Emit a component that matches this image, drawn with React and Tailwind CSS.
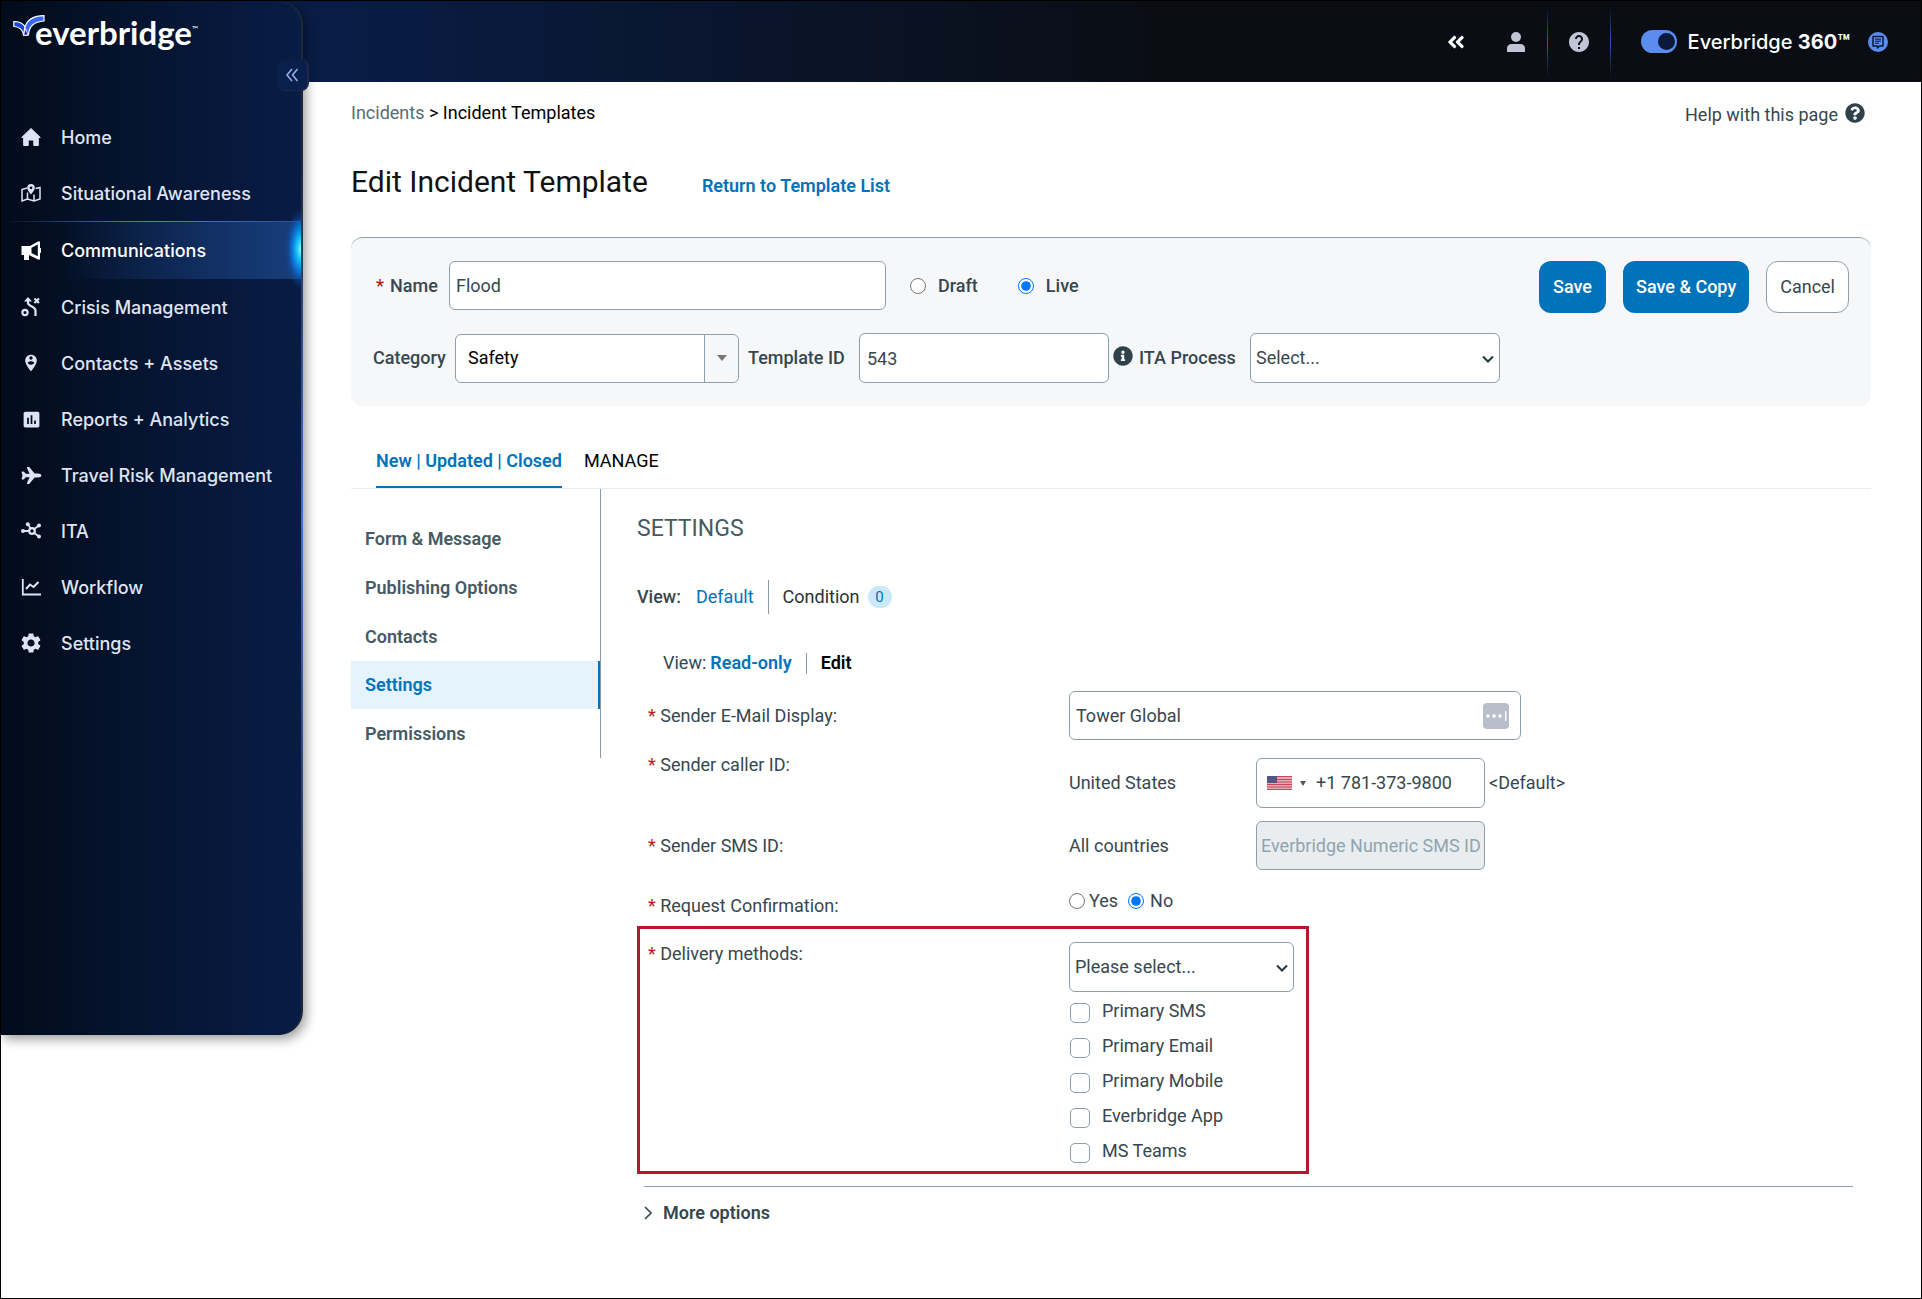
import React from 'react'
import { FaAngleDoubleLeft, FaInfoCircle, FaQuestionCircle } from 'react-icons/fa'
import { IoAirplane } from 'react-icons/io5'
import { MdHelp, MdInsertChart, MdPersonPinCircle, MdSettings } from 'react-icons/md'

/* Icons */

const HomeIcon = () => (
    <svg width="20" height="20" viewBox="0 0 20 20" fill="currentColor" stroke="currentColor" strokeLinejoin="round">
        <path d="M10 1.5 L19.3 10.5 H17.3 V18.5 H12.8 V13 H7.2 V18.5 H2.7 V10.5 H.7 z" />
    </svg>
)

const MapIcon = () => (
    <svg width="20" height="20" viewBox="0 0 20 20" fill="none" stroke="currentColor" strokeWidth="1.5">
        <path d="M6 5 L1 6.5 V18 L6.5 16 L13 18 L19 16 V4.5 L14.5 5.5" />
        <path d="M6.5 9.5 V16 M13 11.5 V18" />
        <path
            d="M10 1 a3.8 3.8 0 0 1 3.8 3.8 c0 2.6-3.8 6.7-3.8 6.7 s-3.8-4.1-3.8-6.7 A3.8 3.8 0 0 1 10 1 z M10 3.4 a1.4 1.4 0 1 0 0 2.8 a1.4 1.4 0 0 0 0-2.8 z"
            fill="currentColor"
            fillRule="evenodd"
            stroke="none"
        />
    </svg>
)

const MegaphoneIcon = () => (
    <svg width="20" height="20" viewBox="0 0 20 20" fill="currentColor">
        <path d="M.5 5 H9 L17 .5 H19 V7 a2.4 2.4 0 0 1 0 5 V18.5 H17 L8 14 V19 H3 V14 H.5 z M10.5 6.8 V12 L16.8 15.2 V3.6 z" fillRule="evenodd" />
    </svg>
)

const StrategyIcon = () => (
    <svg width="20" height="20" viewBox="0 0 20 20" fill="none" stroke="currentColor" strokeWidth="2.2">
        <circle cx="4" cy="15.5" r="2.6" />
        <path d="M7 3.5 V6 c0 3.5 7.5 3 7.5 7.5 V19" />
        <path d="M7 0 L11 4.6 H3 z" fill="currentColor" stroke="none" />
        <path d="M13.5 1.5 L18 6 M18 1.5 L13.5 6" />
    </svg>
)

const NodesIcon = () => (
    <svg width="20" height="20" viewBox="0 0 20 20" fill="none" stroke="currentColor" strokeWidth="1.8">
        <path d="M2 10 H8 M7 3.5 L10 8 M12.5 8.5 L18 4.5 M12.5 11.5 L18 15.5" />
        <circle cx="11" cy="10" r="2.8" strokeWidth="2.2" />
        <g fill="currentColor" stroke="none">
            <circle cx="2" cy="10" r="2" />
            <circle cx="6.8" cy="3.2" r="2" />
            <circle cx="18" cy="4.5" r="2" />
            <circle cx="18" cy="15.5" r="2" />
        </g>
    </svg>
)

const TrendIcon = () => (
    <svg width="20" height="20" viewBox="0 0 20 20" fill="none" stroke="currentColor">
        <path d="M1.8 2 V17.5 H20" strokeWidth="1.8" />
        <path d="M5 12 L9 7.5 L12.5 10 L17.5 5" strokeWidth="2" />
    </svg>
)

const ChatIcon = () => (
    <svg width="20" height="20" viewBox="0 0 20 20" fill="none">
        <circle cx="10" cy="10" r="10" fill="#5b8def" />
        <path d="M5 4.5 H15 V14 H11.5 L9.5 16 V14 H5 z" stroke="#0b1a3a" strokeWidth="1.5" strokeLinejoin="round" />
        <path d="M7 7.2 H13 M7 9.2 H13 M7 11.2 H11" stroke="#0b1a3a" />
    </svg>
)

const FlagIcon = () => (
    <svg className="shrink-0" width="25" height="14" viewBox="0 0 25 14">
        <rect width="25" height="14" fill="#e8a9b3" />
        <path d="M0 .5 H25 M0 3.5 H25 M0 6 H25 M0 8.5 H25 M0 11 H25 M0 13.5 H25" stroke="#c8485b" />
        <rect width="10" height="7" fill="#555585" />
    </svg>
)

const Logo = () => (
    <a href="#" className="flex items-start text-white">
        <svg width="32" height="24" viewBox="0 0 32 24" stroke="#fff" strokeWidth="1.2">
            <path d="M.8 8.5 C6 8.5 10 10.5 12 13.5 L14 22 H10.5 C10 17 6 13.5 .8 13.5 z" fill="#1d45d8" />
            <path d="M12 14 C14 7 21 2.8 31 2.6 V8 C22 8.5 16 13 15.5 22 H10.5 z" fill="#3a67f5" />
            <path d="M12.6 15.5 L15 22 H10.6 z" fill="#14189a" strokeWidth=".8" />
        </svg>
        <span className="-ml-2.5 font-['Lato',sans-serif] text-[33px] leading-[38px] font-bold">everbridge</span>
        <span className="mt-2.5 font-['Lato',sans-serif] text-[8px] leading-3">™</span>
    </a>
)

/* Navigation */

const navItems = [
    { label: 'Home', icon: <HomeIcon /> },
    { label: 'Situational Awareness', icon: <MapIcon /> },
    { label: 'Communications', icon: <MegaphoneIcon />, active: true },
    { label: 'Crisis Management', icon: <StrategyIcon /> },
    { label: 'Contacts + Assets', icon: <MdPersonPinCircle size={20} /> },
    { label: 'Reports + Analytics', icon: <MdInsertChart size={21} /> },
    { label: 'Travel Risk Management', icon: <IoAirplane size={21} /> },
    { label: 'ITA', icon: <NodesIcon /> },
    { label: 'Workflow', icon: <TrendIcon /> },
    { label: 'Settings', icon: <MdSettings size={24} /> },
]

const NavItem = ({ label, icon, active }) => (
    <li className="relative">
        {active && (
            <>
                <div className="h-px bg-linear-to-r from-transparent via-[#4f7fe6] to-[#2a4f94]" />
                <div className="absolute top-[-12px] right-0 h-20 w-4 bg-[radial-gradient(ellipse_at_right,#8ffcff_0%,#1cc4fa_18%,#0a7fe0_36%,rgba(10,95,200,0.4)_54%,transparent_70%)]" />
            </>
        )}
        <a
            href="#"
            className={
                active
                    ? 'flex h-[57px] items-center gap-[18px] bg-linear-to-r from-transparent from-20% to-[#183e7c] pl-[18px] text-white'
                    : 'flex h-14 items-center gap-[18px] pl-[18px] text-[#dfe4f5]'
            }
        >
            <span className="flex w-6 justify-center">{icon}</span>
            {label}
        </a>
    </li>
)

const Sidebar = () => (
    <aside className="relative z-10 col-start-1 row-span-2 row-start-1 self-start rounded-r-3xl bg-linear-to-b from-[#1f2739] from-15% via-[#4470cc] via-50% to-[#1f2739] to-95% pr-0.5 shadow-[3px_4px_12px_rgba(0,0,0,0.4)]">
        <div className="rounded-r-3xl bg-linear-to-r from-[#020b18] via-[#05132e] via-40% to-[#081c45] pt-3 pb-[364px]">
            <div className="pl-3">
                <Logo />
            </div>
            <nav className="pt-[58px]">
                <ul className="font-['Inter',sans-serif] text-[18px] font-medium">
                    {navItems.map((item) => (
                        <NavItem key={item.label} {...item} />
                    ))}
                </ul>
            </nav>
        </div>
        <button
            aria-label="Collapse menu"
            className="absolute top-[58px] -right-1.5 flex h-8 w-8 items-center justify-center rounded-lg border-r-2 border-b border-[#1c2a48] bg-[#0a1f4b] text-[#8fb0e8]"
        >
            <svg width="14" height="14" viewBox="0 0 14 14" fill="none" stroke="currentColor" strokeWidth="1.6">
                <path d="M7 1 L2 7 L7 13 M12.5 1 L7.5 7 L12.5 13" />
            </svg>
        </button>
    </aside>
)

const HeaderDivider = () => (
    <div className="h-[72px] w-px bg-linear-to-b from-transparent via-[#2c5cb0] to-transparent" />
)

const Header = () => (
    <header className="col-span-2 col-start-1 row-start-1 flex h-[81px] items-center justify-end bg-linear-to-r from-[#081c45] from-18% to-[#0a0d14] to-60% pr-[33px]">
        <button aria-label="Collapse header" className="mr-10 text-white">
            <FaAngleDoubleLeft size={20} />
        </button>
        <button aria-label="Account" className="mr-[21px] text-[#c1c5d6]">
            <svg width="20" height="20" viewBox="0 0 20 20" fill="currentColor">
                <circle cx="10" cy="5" r="5" />
                <path d="M1 20 V16.5 C1 13.5 3 12 5.5 12 H14.5 C17 12 19 13.5 19 16.5 V20 z" />
            </svg>
        </button>
        <HeaderDivider />
        <button aria-label="Help" className="mx-[19px] text-[#c1c5d6]">
            <MdHelp size={24} />
        </button>
        <HeaderDivider />
        <label className="ml-[30px] flex items-center gap-[11px] font-['Inter',sans-serif] text-[20px] font-medium text-white">
            <input type="checkbox" role="switch" defaultChecked className="peer sr-only" />
            <span className="flex h-[23px] w-9 items-center justify-end rounded-full bg-[#5b8def] pr-0.5">
                <span className="size-[17px] rounded-full bg-[#0b1a3a]" />
            </span>
            <span>
                Everbridge <b className="font-bold">360™</b>
            </span>
        </label>
        <button aria-label="Messages" className="ml-[18px]">
            <ChatIcon />
        </button>
    </header>
)

/* Form parts */

const Required = () => <span className="text-[#b71c1c]">*</span>

const Row = ({ label, htmlFor, className, children }) => (
    <div className={`grid grid-cols-[421px_1fr] ${className}`}>
        <label htmlFor={htmlFor} className="leading-6">
            <Required /> {label}
        </label>
        {children}
    </div>
)

const Select = ({ id, text, className }) => (
    <div className={`relative ${className}`}>
        <select
            id={id}
            className="h-[50px] w-full appearance-none rounded-md border border-[#8ba0ab] bg-white px-[5px]"
        >
            <option>{text}</option>
        </select>
        <svg
            className="pointer-events-none absolute top-5 right-1.5"
            width="12"
            height="12"
            viewBox="0 0 12 12"
            fill="none"
            stroke="#263840"
            strokeWidth="2"
        >
            <path d="M1 3.5 L6 8.5 L11 3.5" />
        </svg>
    </div>
)

const TemplatePanel = () => (
    <section className="mt-[35px] rounded-xl border-t border-[#8ba3ad] bg-[#f5f7f9] px-[22px] py-[23px] font-medium">
        <div className="flex items-start">
            <div className="flex h-[49px] items-center">
                <label htmlFor="name" className="ml-[3px] w-[73px]">
                    <Required />
                    <span className="ml-1.5">Name</span>
                </label>
                <input
                    id="name"
                    defaultValue="Flood"
                    className="h-[49px] w-[437px] rounded-md border border-[#8ba0ab] bg-white px-1.5 font-normal"
                />
                <label className="ml-6 flex items-center gap-3">
                    <input type="radio" name="status" className="size-4" />
                    Draft
                </label>
                <label className="ml-10 flex items-center gap-3">
                    <input type="radio" name="status" defaultChecked className="size-4 accent-[#0075ff]" />
                    Live
                </label>
            </div>
            <div className="ml-auto flex gap-[17px]">
                <button className="h-[52px] rounded-xl bg-[#0073bb] px-3.5 text-white">Save</button>
                <button className="h-[52px] rounded-xl bg-[#0073bb] px-[13px] text-white">Save &amp; Copy</button>
                <button className="h-[52px] rounded-xl border border-[#8ba0ab] bg-white px-[13px] font-normal">
                    Cancel
                </button>
            </div>
        </div>
        <div className="mt-5 flex items-center">
            <label htmlFor="category" className="w-[82px]">
                Category
            </label>
            <div className="relative h-[49px] w-[284px]">
                <select
                    id="category"
                    className="h-full w-full appearance-none rounded-md border border-[#8ba0ab] bg-white px-3 font-normal text-black"
                >
                    <option>Safety</option>
                </select>
                <span className="pointer-events-none absolute inset-y-px right-px flex w-[34px] items-center justify-center rounded-r-md border-l border-[#8ba0ab] bg-[#f5f7f9]">
                    <span className="border-x-5 border-t-6 border-x-transparent border-t-[#777]" />
                </span>
            </div>
            <label htmlFor="template-id" className="ml-[9px] w-[111px]">
                Template ID
            </label>
            <input
                id="template-id"
                defaultValue="543"
                className="h-[50px] w-[250px] rounded-md border border-[#8ba0ab] bg-white px-[7px] font-normal"
            />
            <FaInfoCircle size={20} className="mx-1 mb-1 text-[#2f414a]" />
            <label htmlFor="ita" className="ml-0.5 w-[111px]">
                ITA Process
            </label>
            <Select id="ita" text="Select..." className="w-[250px] font-normal" />
        </div>
    </section>
)

const sections = ['Form & Message', 'Publishing Options', 'Contacts', 'Settings', 'Permissions']

const SectionMenu = () => (
    <ul className="w-[250px] shrink-0 self-start border-r border-[#8b9aa5] pt-[25px] font-semibold text-[#455a64]">
        {sections.map((name) => (
            <li key={name}>
                <a
                    href="#"
                    className={
                        name === 'Settings'
                            ? 'flex h-12 items-center border-r-2 border-[#0073bb] bg-[#e5f3fd] pl-3.5 text-[#0073bb]'
                            : 'flex h-[49px] items-center pl-3.5'
                    }
                >
                    {name}
                </a>
            </li>
        ))}
    </ul>
)

const methods = ['Primary SMS', 'Primary Email', 'Primary Mobile', 'Everbridge App', 'MS Teams']

const SettingsForm = () => (
    <section className="flex-1 pt-6 pr-[18px] pl-9">
        <h2 className="text-[23px] leading-8 text-[#455a64]">SETTINGS</h2>
        <div className="mt-[35px] flex h-[34px] items-center">
            <span className="mr-[15px] font-medium">View:</span>
            <a href="#" className="text-[#0073bb]">
                Default
            </a>
            <span className="mx-3.5 h-full w-px bg-[#8b9aa5]" />
            <a href="#" className="text-[#263238]">
                Condition
            </a>
            <span className="ml-2 flex h-[22px] w-6 items-center justify-center rounded-full bg-[#cbe8fb] text-[15px] text-[#0073bb]">
                0
            </span>
        </div>
        <div className="mt-[37px] flex items-center pl-[26px] leading-6">
            <span className="mr-1">View:</span>
            <a href="#" className="font-semibold text-[#0073bb]">
                Read-only
            </a>
            <span className="mx-3.5 h-[21px] w-px bg-[#8b9aa5]" />
            <a href="#" className="font-semibold text-black">
                Edit
            </a>
        </div>

        <div className="pl-[11px]">
            <Row label="Sender E-Mail Display:" htmlFor="sender" className="mt-4 items-center">
                <div className="relative w-[452px]">
                    <input
                        id="sender"
                        defaultValue="Tower Global"
                        className="h-[49px] w-full rounded-md border border-[#8ba0ab] px-1.5"
                    />
                    <svg className="absolute top-3 right-3" width="26" height="26" viewBox="0 0 26 26" fill="#fff">
                        <rect width="26" height="26" rx="4" fill="#b8bfca" />
                        <circle cx="5" cy="13" r="1.8" />
                        <circle cx="11" cy="13" r="1.8" />
                        <circle cx="17" cy="13" r="1.8" />
                        <rect x="22" y="8" width="1.4" height="10" />
                    </svg>
                </div>
            </Row>
            <Row label="Sender caller ID:" htmlFor="caller" className="mt-[13px]">
                <div className="flex items-center pt-[5px]">
                    <span className="w-[187px]">United States</span>
                    <div className="flex h-[50px] w-[229px] items-center rounded-md border border-[#8ba0ab] pl-2.5">
                        <FlagIcon />
                        <span className="mr-2.5 ml-2 border-x-3 border-t-5 border-x-transparent border-t-[#555]" />
                        <input id="caller" defaultValue="+1 781-373-9800" className="w-full min-w-0" />
                    </div>
                    <span className="ml-1">&lt;Default&gt;</span>
                </div>
            </Row>
            <Row label="Sender SMS ID:" htmlFor="sms" className="mt-[13px] items-center">
                <div className="flex items-center">
                    <span className="w-[187px]">All countries</span>
                    <input
                        id="sms"
                        disabled
                        defaultValue="Everbridge Numeric SMS ID"
                        className="h-[49px] w-[229px] rounded-md border border-[#8ba0ab] bg-[#e9edf0] px-1 text-[#90a4ae]"
                    />
                </div>
            </Row>
            <Row label="Request Confirmation:" className="mt-[19px] pt-[5px]">
                <div className="-mt-[5px] flex items-start leading-6">
                    <label className="flex items-center gap-1">
                        <input type="radio" name="confirm" className="size-4" />
                        Yes
                    </label>
                    <label className="ml-2.5 flex items-center gap-1.5">
                        <input type="radio" name="confirm" defaultChecked className="size-4 accent-[#0075ff]" />
                        No
                    </label>
                </div>
            </Row>
        </div>

        <div className="mt-2 w-[672px] border-3 border-[#b5182b] pt-[13px] pb-2 pl-2">
            <Row label="Delivery methods:" htmlFor="delivery" className="">
                <div>
                    <Select id="delivery" text="Please select..." className="w-[225px]" />
                    <ul className="flex flex-col gap-[11px] pt-[7px]">
                        {methods.map((method) => (
                            <li key={method}>
                                <label className="flex h-6 items-start gap-3 leading-6">
                                    <input
                                        type="checkbox"
                                        className="mt-1 ml-px size-5 appearance-none rounded-[5px] border border-[#8ba0ab] bg-white"
                                    />
                                    {method}
                                </label>
                            </li>
                        ))}
                    </ul>
                </div>
            </Row>
        </div>

        <hr className="mt-3 ml-[7px] border-[#8ba3ad]" />
        <button className="mt-3.5 ml-[7px] flex items-center gap-[11px] font-semibold">
            <svg width="8" height="14" viewBox="0 0 8 14" fill="none" stroke="currentColor" strokeWidth="1.6">
                <path d="M1 1 L7 7 L1 13" />
            </svg>
            More options
        </button>
    </section>
)

const App = () => {
    return (
        <div className="grid min-h-screen grid-cols-[302px_1fr] grid-rows-[81px_1fr] border border-black bg-white">
            <Header />
            <Sidebar />
            <main className="col-start-2 row-start-2 pt-[19px] pr-[50px] pl-12 font-['Roboto',sans-serif] text-[18px] leading-6 text-[#37474f]">
                <div className="flex items-start justify-between">
                    <div className="text-black">
                        <a href="#" className="text-[#546e7a]">
                            Incidents
                        </a>{' '}
                        &gt; Incident Templates
                    </div>
                    <a href="#" className="mr-1.5 flex items-center gap-[7px] pt-0.5">
                        Help with this page
                        <FaQuestionCircle size={20} className="mb-1 text-[#2f414a]" />
                    </a>
                </div>
                <div className="mt-[35px] flex items-baseline gap-[54px]">
                    <h1 className="text-[30px] leading-10 text-[#111]">Edit Incident Template</h1>
                    <a href="#" className="font-semibold text-[#0073bb]">
                        Return to Template List
                    </a>
                </div>

                <TemplatePanel />

                <div className="mt-9 flex gap-[22px] border-b border-[#e8ebed] pl-[25px]">
                    <a href="#" className="h-[46px] border-b-2 border-[#0073bb] pt-[7px] font-semibold text-[#0073bb]">
                        New | Updated | Closed
                    </a>
                    <a href="#" className="pt-[7px] text-black">
                        MANAGE
                    </a>
                </div>
                <div className="flex">
                    <SectionMenu />
                    <SettingsForm />
                </div>
            </main>
        </div>
    )
}

export default App
